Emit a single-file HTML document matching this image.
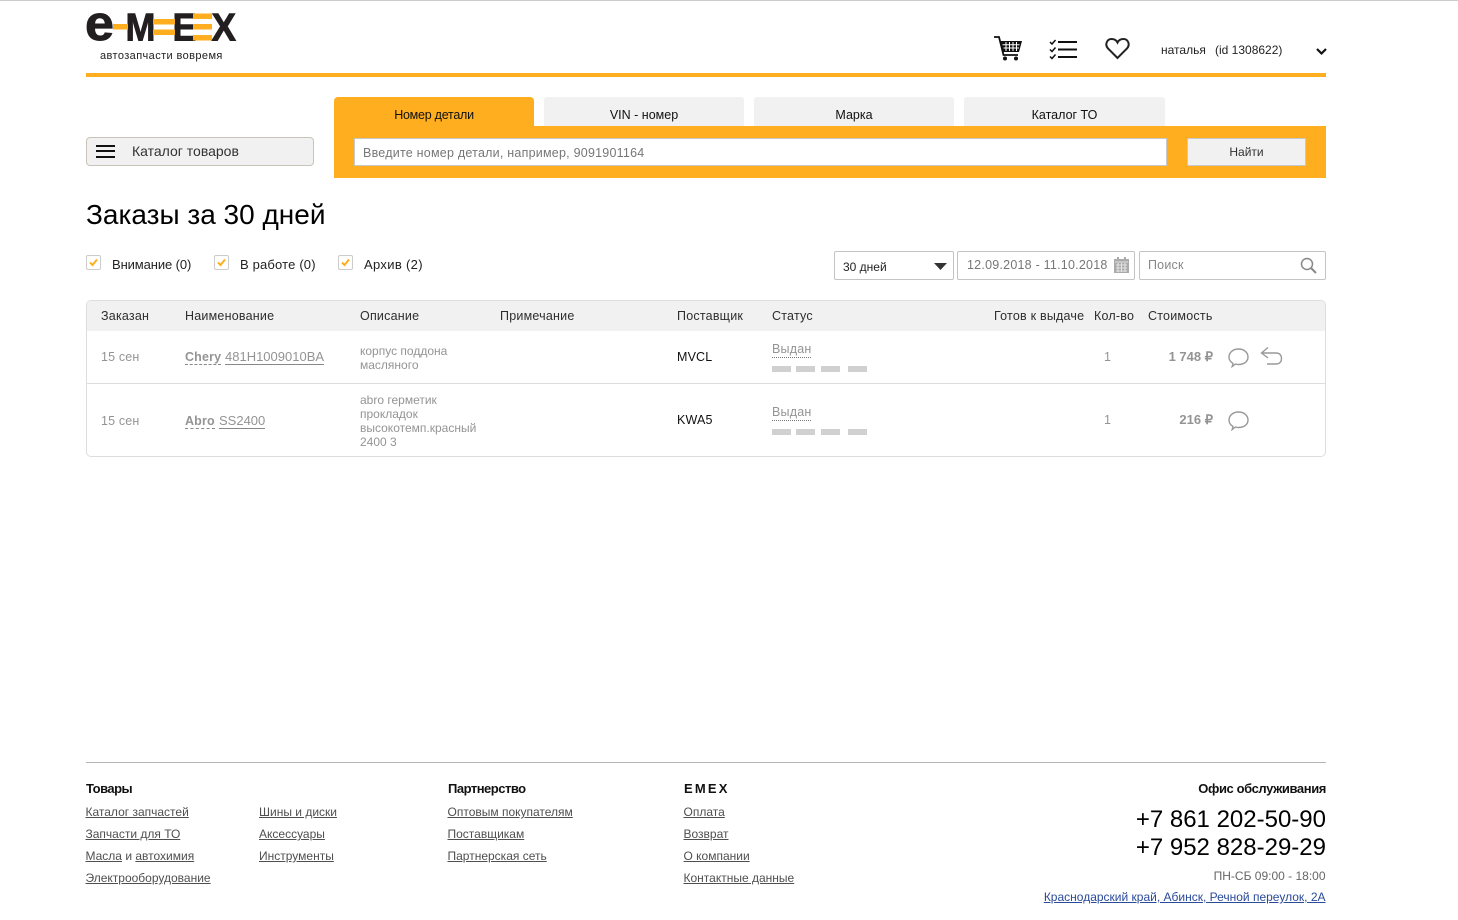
<!DOCTYPE html>
<html lang="ru"><head><meta charset="utf-8"><title>Заказы за 30 дней</title>
<style>
html,body{margin:0;padding:0;background:#fff}
body{width:1458px;height:920px;position:relative;overflow:hidden;font-family:"Liberation Sans",Arial,sans-serif;font-size:12px;color:#222}
.a,.t{position:absolute}
.t{white-space:nowrap;line-height:14px}
.r{text-align:right}
.tab{position:absolute;top:97px;width:200px;height:29px;background:#f1f1f1;border-radius:3px 3px 0 0;text-align:center;line-height:36px;font-size:12.500px;color:#111}
.cb{position:absolute;top:255px;width:13px;height:13px;border:1px solid #ccc;border-radius:2px;background:#fff}
.cb svg{position:absolute;left:0;top:0}
.box{position:absolute;box-sizing:border-box;border:1px solid #c4c4c4;border-radius:2px;background:#fff}
.g{color:#949494}
.h{color:#2e2e2e;font-size:12.500px;letter-spacing:.22px}
.d{border-bottom:1px dashed #888}
.f a{color:#4f4f4f;text-decoration:underline}
.f{font-size:12px;color:#4f4f4f}
.b{position:absolute;width:19px;height:6px;background:#d0d0d0}
.fh{font-size:13px;font-weight:700;color:#111;letter-spacing:-.5px}
</style></head><body>
<div class="a" style="left:0;top:0;width:1458px;height:1px;background:#ccc"></div>

<svg class="a" style="left:80px;top:5px" width="170" height="50" viewBox="0 0 170 50">
<g font-family="Liberation Sans" font-weight="700" fill="#231f20" stroke="#231f20" stroke-width=".9">
<text x="5" y="35.200" font-size="49" textLength="29" lengthAdjust="spacingAndGlyphs">e</text>
<text x="45.500" y="35.300" font-size="39" textLength="30" lengthAdjust="spacingAndGlyphs">M</text>
<text x="92.500" y="35.300" font-size="39" textLength="24" lengthAdjust="spacingAndGlyphs">E</text>
<text x="131.500" y="35.300" font-size="39" textLength="24.500" lengthAdjust="spacingAndGlyphs">X</text>
</g>
<rect x="33" y="19" width="15" height="5.500" fill="#ffae1f"/>
<rect x="73" y="14" width="22" height="5.500" fill="#ffae1f"/><rect x="73" y="24.500" width="22" height="5.500" fill="#ffae1f"/>
<rect x="113" y="8.500" width="19" height="5.500" fill="#ffae1f"/><rect x="113" y="19" width="19" height="5.500" fill="#ffae1f"/><rect x="113" y="30" width="19" height="5.500" fill="#ffae1f"/>
</svg>
<div class="t" style="left:100px;top:49px;font-size:11px;letter-spacing:.4px;color:#222">автозапчасти вовремя</div>
<div class="a" style="left:86px;top:73px;width:1240px;height:4px;background:#ffae1f"></div>

<svg class="a" style="left:993px;top:35px" width="30" height="27" viewBox="0 0 30 27" fill="none" stroke="#111">
<path d="M1 2H6L10.500 20H25" stroke-width="1.800"/>
<path d="M7 6H29L26 17H9.500Z" fill="#111" stroke="none"/>
<path d="M9.500 9.700H26.500M10.500 13H26M13 7V16M16.500 7V16M20 7V16M23.500 7V16" stroke="#fff" stroke-width="1"/>
<circle cx="12" cy="23.500" r="2" fill="#111" stroke="none"/><circle cx="23" cy="23.500" r="2" fill="#111" stroke="none"/>
</svg>
<svg class="a" style="left:1049px;top:39px" width="29" height="21" viewBox="0 0 29 21" fill="none" stroke="#111">
<path d="M1 3L3 5L6.500 1M1 10.500L3 12.500L6.500 8.500M1 17.500L3 19.500L6.500 15.500" stroke-width="1.500"/>
<path d="M9 3H28M9 10.500H28M9 18H28" stroke-width="2"/>
</svg>
<svg class="a" style="left:1105px;top:37px" width="25" height="23" viewBox="0 0 25 23" fill="none" stroke="#222" stroke-width="2">
<path d="M12.500 21L3 11.500C-.5 7.500 2 2 6.500 2C9.500 2 11.500 3.500 12.500 5.500C13.500 3.500 15.500 2 18.500 2C23 2 25.500 7.500 22 11.500Z"/>
</svg>
<div class="t" style="left:1161px;top:43px;color:#222">наталья</div>
<div class="t" style="left:1215px;top:43px;color:#222">(id 1308622)</div>
<svg class="a" style="left:1315px;top:47px" width="13" height="9" viewBox="0 0 13 9" fill="none" stroke="#111" stroke-width="2.200"><path d="M2 2L6.500 6.500L11 2"/></svg>

<div class="a" style="left:86px;top:137px;width:228px;height:29px;box-sizing:border-box;background:#f1f1f1;border:1px solid #c8c4b8;border-radius:4px"></div>
<div class="a" style="left:96px;top:145px;width:19px;height:2px;background:#111"></div>
<div class="a" style="left:96px;top:150px;width:19px;height:2px;background:#111"></div>
<div class="a" style="left:96px;top:156px;width:19px;height:2px;background:#111"></div>
<div class="t" style="left:132px;top:144px;font-size:14px;color:#333">Каталог товаров</div>

<div class="tab" style="left:334px;background:#ffae1f;width:200px;border-radius:4px 4px 0 0;letter-spacing:-.25px">Номер детали</div>
<div class="tab" style="left:544px">VIN - номер</div>
<div class="tab" style="left:754px">Марка</div>
<div class="tab" style="left:964px;width:201px">Каталог ТО</div>
<div class="a" style="left:334px;top:126px;width:992px;height:52px;background:#ffae1f"></div>
<div class="box" style="left:354px;top:138px;width:813px;height:28px;border-radius:0;border-color:#c8c8c8"></div>
<div class="t" style="left:363px;top:146px;color:#777;font-size:12.500px;letter-spacing:.23px">Введите номер детали, например, 9091901164</div>
<div class="a" style="left:1187px;top:138px;width:119px;height:28px;box-sizing:border-box;background:#f1f1f1;border:1px solid #c8c8c8"></div>
<div class="t" style="left:1187px;width:119px;text-align:center;top:145px;color:#333">Найти</div>

<div class="t" style="left:86px;top:198px;line-height:34px;font-size:28px;color:#000">Заказы за 30 дней</div>

<div class="cb" style="left:86px"><svg width="13" height="13" viewBox="0 0 13 13" fill="none" stroke="#ffae1f" stroke-width="2"><path d="M3 6.500L5.500 9L10 3.500"/></svg></div>
<div class="t" style="left:112px;top:258px;font-size:13px;color:#222;letter-spacing:-.1px">Внимание (0)</div>
<div class="cb" style="left:214px"><svg width="13" height="13" viewBox="0 0 13 13" fill="none" stroke="#ffae1f" stroke-width="2"><path d="M3 6.500L5.500 9L10 3.500"/></svg></div>
<div class="t" style="left:240px;top:258px;font-size:13px;color:#222;letter-spacing:.17px">В работе (0)</div>
<div class="cb" style="left:338px"><svg width="13" height="13" viewBox="0 0 13 13" fill="none" stroke="#ffae1f" stroke-width="2"><path d="M3 6.500L5.500 9L10 3.500"/></svg></div>
<div class="t" style="left:364px;top:258px;font-size:13px;color:#222;letter-spacing:.33px">Архив (2)</div>

<div class="box" style="left:834px;top:251px;width:120px;height:29px"></div>
<div class="t" style="left:843px;top:260px;color:#222">30 дней</div>
<svg class="a" style="left:934px;top:263px" width="13" height="7"><path d="M0 0H13L6.500 7Z" fill="#333"/></svg>
<div class="box" style="left:957px;top:251px;width:178px;height:29px"></div>
<div class="t" style="left:967px;top:258px;color:#777;letter-spacing:.23px;font-size:12.500px">12.09.2018 - 11.10.2018</div>
<svg class="a" style="left:1114px;top:257px" width="15" height="16" viewBox="0 0 15 16"><rect x="0" y="2" width="15" height="14" fill="#aaa"/><rect x="3" y="0" width="2" height="3" fill="#aaa"/><rect x="10" y="0" width="2" height="3" fill="#aaa"/><path d="M1 5H14M2 8H13M2 11H13M2 14H13M4 6V15M7.500 6V15M11 6V15" stroke="#e4e4e4" stroke-width="1" fill="none"/></svg>
<div class="box" style="left:1139px;top:251px;width:187px;height:29px"></div>
<div class="t" style="left:1148px;top:258px;color:#888;font-size:12.500px;letter-spacing:.2px">Поиск</div>
<svg class="a" style="left:1300px;top:257px" width="17" height="17" viewBox="0 0 17 17" fill="none" stroke="#888" stroke-width="1.500"><circle cx="7" cy="7" r="5.500"/><path d="M11 11L16 16" stroke-width="2"/></svg>

<div class="a" style="left:86px;top:300px;width:1240px;height:157px;box-sizing:border-box;border:1px solid #ddd;border-radius:5px;overflow:hidden">
<div class="a" style="left:0;top:0;width:1238px;height:30px;background:#f1f1f1"></div>
<div class="a" style="left:0;top:82px;width:1238px;height:1px;background:#ddd"></div>
</div>
<div class="t h" style="left:101px;top:309px">Заказан</div>
<div class="t h" style="left:185px;top:309px">Наименование</div>
<div class="t h" style="left:360px;top:309px">Описание</div>
<div class="t h" style="left:500px;top:309px">Примечание</div>
<div class="t h" style="left:677px;top:309px">Поставщик</div>
<div class="t h" style="left:772px;top:309px">Статус</div>
<div class="t h" style="left:994px;top:309px">Готов к выдаче</div>
<div class="t h" style="left:1094px;top:309px">Кол-во</div>
<div class="t h" style="left:1148px;top:309px">Стоимость</div>

<div class="t g" style="left:101px;top:350px;font-size:12.500px;letter-spacing:.15px">15 сен</div>
<div class="t g" style="left:185px;top:350px;font-size:12.500px;font-weight:700;letter-spacing:.15px"><span class="d">Chery</span></div>
<div class="t g" style="left:225px;top:350px;font-size:13px;border-bottom:1px solid #888">481H1009010BA</div>
<div class="t g" style="left:360px;top:344px;font-size:12px">корпус поддона<br>масляного</div>
<div class="t" style="left:677px;top:350px;color:#111;font-size:12.500px;letter-spacing:.15px">MVCL</div>
<div class="t g" style="left:772px;top:342px;font-size:12.500px;letter-spacing:.2px;border-bottom:1px dotted #777;line-height:15px">Выдан</div>
<div class="b" style="left:772px;top:366px"></div><div class="b" style="left:796px;top:366px"></div><div class="b" style="left:821px;top:366px"></div><div class="b" style="left:848px;top:366px;width:19px"></div>
<div class="t g" style="left:1104px;top:350px;font-size:12.500px">1</div>
<div class="t g r" style="left:1113px;width:100px;top:350px;font-size:13px;font-weight:700">1 748 ₽</div>

<svg class="a" style="left:1228px;top:347px" width="22" height="21" viewBox="0 0 22 21" fill="none" stroke="#999" stroke-width="1.400"><path d="M5 16.500C2.500 15 1 12.800 1 10C1 5.500 5 2 10.500 2C16 2 20 5.500 20 10C20 14.500 16 17.500 10.500 17.500C9.500 17.500 8.500 17.400 7.500 17L4.200 19.500Z"/></svg>
<svg class="a" style="left:1260px;top:346px" width="23" height="20" viewBox="0 0 23 20" fill="none" stroke="#999" stroke-width="1.400"><path d="M8 1.500L1.500 7L8 12M1.500 7H16C19.500 7 21.500 9 21.500 12.500C21.500 16 19.500 18 16 18H7"/></svg>

<div class="t g" style="left:101px;top:414px;font-size:12.500px;letter-spacing:.15px">15 сен</div>
<div class="t g" style="left:185px;top:414px;font-size:12.500px;font-weight:700;letter-spacing:.15px"><span class="d">Abro</span></div>
<div class="t g" style="left:219px;top:414px;font-size:13px;border-bottom:1px solid #888">SS2400</div>
<div class="t g" style="left:360px;top:393px;font-size:12px">abro герметик<br>прокладок<br>высокотемп.красный<br>2400 3</div>
<div class="t" style="left:677px;top:413px;color:#111;font-size:12.500px;letter-spacing:.15px">KWA5</div>
<div class="t g" style="left:772px;top:405px;font-size:12.500px;letter-spacing:.2px;border-bottom:1px dotted #777;line-height:15px">Выдан</div>
<div class="b" style="left:772px;top:429px"></div><div class="b" style="left:796px;top:429px"></div><div class="b" style="left:821px;top:429px"></div><div class="b" style="left:848px;top:429px"></div>
<div class="t g" style="left:1104px;top:413px;font-size:12.500px">1</div>
<div class="t g r" style="left:1113px;width:100px;top:413px;font-size:13px;font-weight:700">216 ₽</div>
<svg class="a" style="left:1228px;top:410px" width="22" height="21" viewBox="0 0 22 21" fill="none" stroke="#999" stroke-width="1.400"><path d="M5 16.500C2.500 15 1 12.800 1 10C1 5.500 5 2 10.500 2C16 2 20 5.500 20 10C20 14.500 16 17.500 10.500 17.500C9.500 17.500 8.500 17.400 7.500 17L4.200 19.500Z"/></svg>

<div class="a" style="left:86px;top:762px;width:1240px;height:1px;background:#b5b5b5"></div>
<div class="f">
<div class="t fh" style="left:86px;top:782px">Товары</div>
<div class="t" style="left:85.500px;top:805px"><a>Каталог запчастей</a></div>
<div class="t" style="left:85.500px;top:827px"><a>Запчасти для ТО</a></div>
<div class="t" style="left:85.500px;top:849px"><a>Масла</a> и <a>автохимия</a></div>
<div class="t" style="left:85.500px;top:871px"><a>Электрооборудование</a></div>
<div class="t" style="left:259px;top:805px"><a>Шины и диски</a></div>
<div class="t" style="left:259px;top:827px"><a>Аксессуары</a></div>
<div class="t" style="left:259px;top:849px"><a>Инструменты</a></div>
<div class="t fh" style="left:448px;top:782px">Партнерство</div>
<div class="t" style="left:447.500px;top:805px"><a>Оптовым покупателям</a></div>
<div class="t" style="left:447.500px;top:827px"><a>Поставщикам</a></div>
<div class="t" style="left:447.500px;top:849px"><a>Партнерская сеть</a></div>
<div class="t" style="left:684px;top:782px;font-size:13px;font-weight:700;color:#111;letter-spacing:2.200px">EMEX</div>
<div class="t" style="left:683.500px;top:805px"><a>Оплата</a></div>
<div class="t" style="left:683.500px;top:827px"><a>Возврат</a></div>
<div class="t" style="left:683.500px;top:849px"><a>О компании</a></div>
<div class="t" style="left:683.500px;top:871px"><a>Контактные данные</a></div>
<div class="t r fh" style="left:1026px;width:300px;top:782px;letter-spacing:-.4px">Офис обслуживания</div>
<div class="t r" style="left:1026px;width:300px;top:806px;line-height:28px;font-size:24px;color:#000">+7 861 202-50-90<br>+7 952 828-29-29</div>
<div class="t r" style="left:1026px;width:299.500px;top:869px;color:#666">ПН-СБ 09:00 - 18:00</div>
<div class="t r" style="left:926px;width:399.500px;top:890px"><a style="color:#2a4a9a">Краснодарский край, Абинск, Речной переулок, 2А</a></div>
</div>
</body></html>
